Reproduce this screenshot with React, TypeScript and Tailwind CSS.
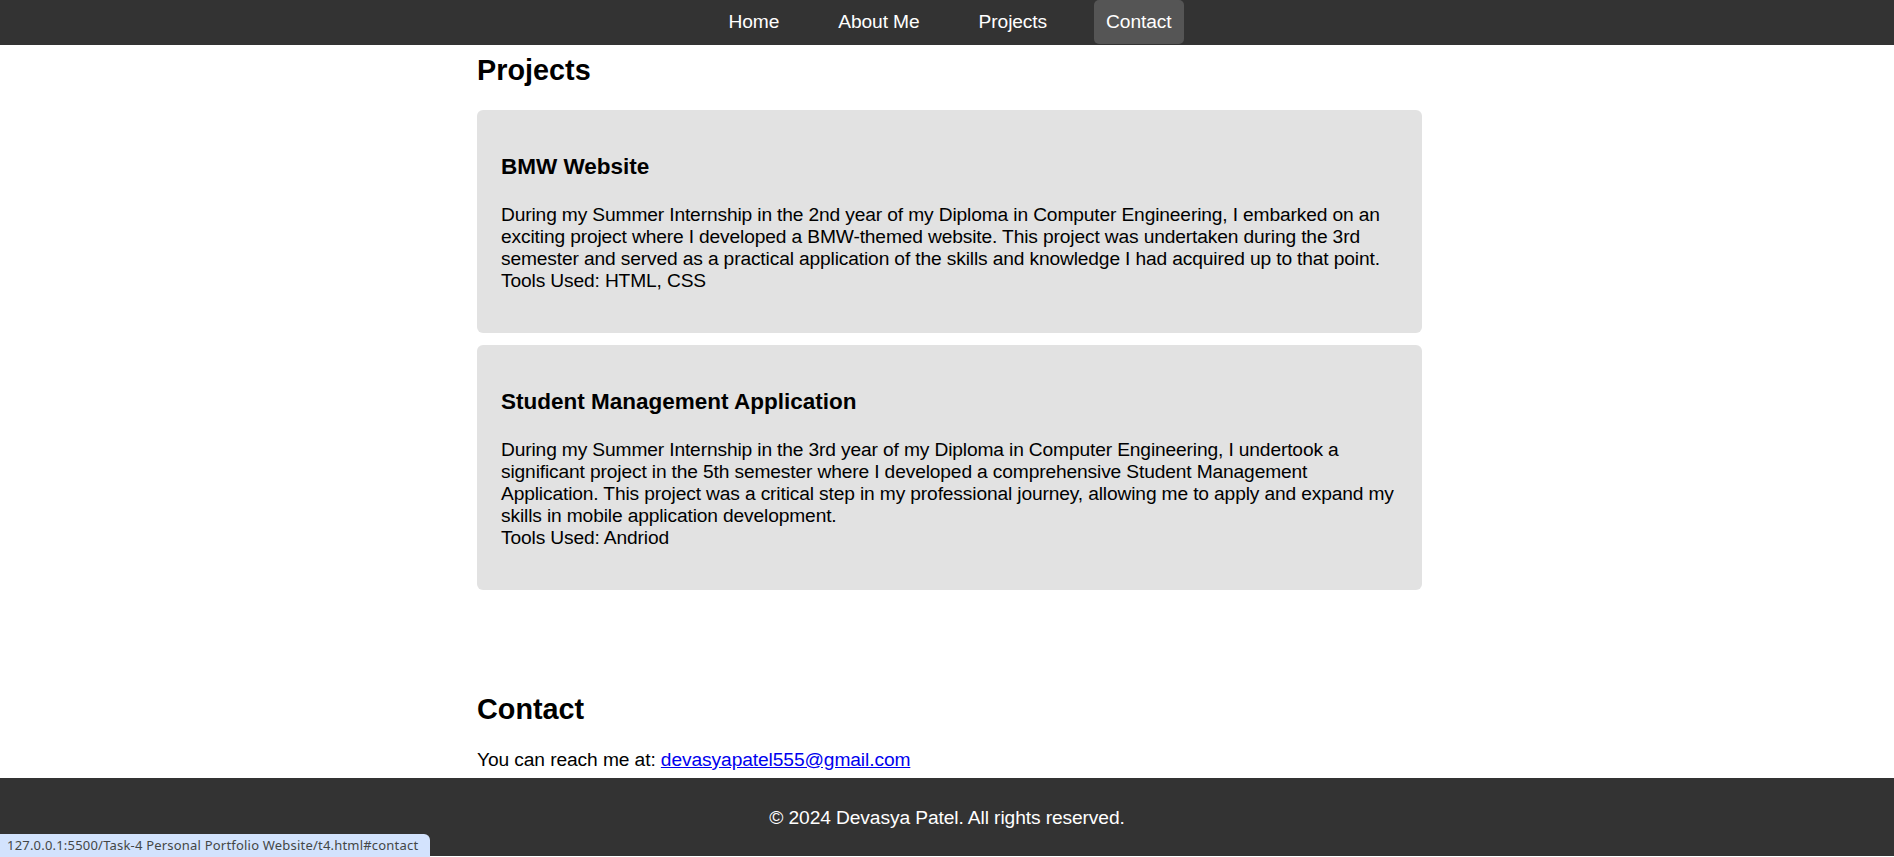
const projects = [
  {
    title: "BMW Website",
    body: "During my Summer Internship in the 2nd year of my Diploma in Computer Engineering, I embarked on an exciting project where I developed a BMW-themed website. This project was undertaken during the 3rd semester and served as a practical application of the skills and knowledge I had acquired up to that point.",
    tools: "HTML, CSS",
  },
  {
    title: "Student Management Application",
    body: "During my Summer Internship in the 3rd year of my Diploma in Computer Engineering, I undertook a significant project in the 5th semester where I developed a comprehensive Student Management Application. This project was a critical step in my professional journey, allowing me to apply and expand my skills in mobile application development.",
    tools: "Andriod",
  },
]

const links = ["Home", "About Me", "Projects", "Contact"]

function Nav() {
  return (
    <nav className="h-[45px] bg-[#333333] flex justify-center items-start pl-[6px]">
      <ul className="flex gap-[35px] h-[44px]">
        {links.map((l) => (
          <li key={l}>
            <a
              href="#"
              className={
                "h-[44px] px-[12px] flex items-center text-white text-[19.2px] tracking-[-0.1px] rounded-[5px] " +
                (l === "Contact" ? "bg-[#555555]" : "")
              }
            >
              {l}
            </a>
          </li>
        ))}
      </ul>
    </nav>
  )
}

export default function App() {
  return (
    <div className="relative min-h-[857px] bg-white text-black font-['Liberation_Sans',Arial,sans-serif]">
      <Nav />

      <div className="pl-[5px]">
        <main className="w-[945px] mx-auto">
          <section>
            <h2 className="mt-[9px] mb-[23px] text-[28.8px] leading-[33px] font-bold">Projects</h2>
            {projects.map((p, i) => (
              <div key={p.title} className={"bg-[#e2e2e2] rounded-[6px] p-[24px] " + (i > 0 ? "mt-[12px]" : "")}>
                <h3 className="mt-[20px] mb-[24px] text-[22.5px] leading-[26px] font-bold">{p.title}</h3>
                <p className="mb-[17px] text-[19.2px] leading-[22px] tracking-[-0.14px]">
                  {p.body}
                  <br />
                  Tools Used: {p.tools}
                </p>
              </div>
            ))}
          </section>

          <section className="mt-[103px]">
            <h2 className="mb-[23px] text-[28.8px] leading-[33px] font-bold">Contact</h2>
            <p className="mb-[7px] text-[19.2px] leading-[22px] tracking-[-0.1px]">
              You can reach me at:{" "}
              <a href="#" className="text-[#0000ee] underline">
                devasyapatel555@gmail.com
              </a>
            </p>
          </section>
        </main>
      </div>

      <footer className="h-[78px] pt-[3px] bg-[#333333] flex items-center justify-center text-white text-[19.2px] tracking-[-0.1px]">
        © 2024 Devasya Patel. All rights reserved.
      </footer>

      <div className="absolute left-0 bottom-0 h-[23px] w-[430px] bg-[#d3e3fd] rounded-tr-[6px] flex items-center pl-[7px] text-[13px] tracking-[0.2px] text-[#444746] font-['Noto_Sans',sans-serif]">
        127.0.0.1:5500/Task-4 Personal Portfolio Website/t4.html#contact
      </div>
    </div>
  )
}
